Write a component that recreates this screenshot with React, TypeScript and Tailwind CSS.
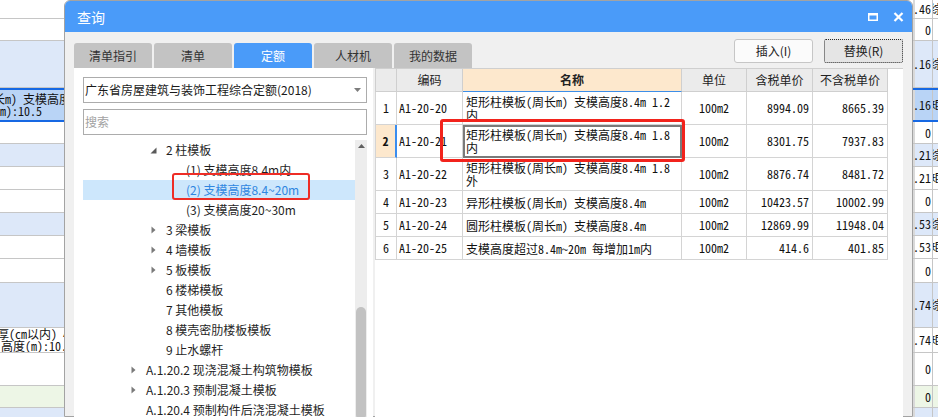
import React from "react";

const MONO = "font-['Noto_Sans_Mono_CJK_SC','Liberation_Mono','Noto_Sans_CJK_SC',monospace]";

type StripRow = {
  h: string;
  bg: string;
  sel?: boolean;
  val?: string;
  side?: string;
  lines?: { t: string; cls: string }[];
};

const STRIP: StripRow[] = [
  { h: "h-[19px]", bg: "bg-white", val: ".46", side: "综" },
  { h: "h-[22px]", bg: "bg-white", val: "0" },
  { h: "h-[47px]", bg: "bg-[#dde8f9]", val: ".16", side: "综" },
  {
    h: "h-[34px]",
    bg: "bg-[#b9d4f6]",
    sel: true,
    val: ".16",
    side: "矩",
    lines: [
      { t: "长m) 支模高度8.4m", cls: "ml-[-7px]" },
      { t: "m):10.5", cls: "ml-0" },
    ],
  },
  { h: "h-[22px]", bg: "bg-white", val: "0" },
  { h: "h-[23px]", bg: "bg-[#dde8f9]", val: ".21", side: "综" },
  { h: "h-[23px]", bg: "bg-white", val: ".21", side: "矩" },
  { h: "h-[23px]", bg: "bg-white", val: "0" },
  { h: "h-[23px]", bg: "bg-[#dde8f9]", val: ".53", side: "综" },
  { h: "h-[23px]", bg: "bg-white", val: ".53", side: "矩" },
  { h: "h-[24px]", bg: "bg-white", val: "0" },
  { h: "h-[45px]", bg: "bg-[#dde8f9]", val: ".74", side: "综" },
  {
    h: "h-[25px]",
    bg: "bg-white",
    val: ".74",
    side: "矩",
    lines: [
      { t: "厚(cm以内) 4", cls: "ml-[-3px]" },
      { t: "高度(m):10.5", cls: "ml-[1px]" },
    ],
  },
  { h: "h-[33px]", bg: "bg-white", val: "0" },
  { h: "h-[22px]", bg: "bg-[#edf6e6]", val: "0" },
  { h: "h-[30px]", bg: "bg-[#dde8f9]", val: "0" },
];

const TREE = [
  { pl: "pl-[69px]", caret: "open", label: "2 柱模板" },
  { pl: "pl-[89px]", label: "(1) 支模高度8.4m内" },
  { pl: "pl-[89px]", label: "(2) 支模高度8.4~20m", sel: true },
  { pl: "pl-[89px]", label: "(3) 支模高度20~30m" },
  { pl: "pl-[69px]", caret: "closed", label: "3 梁模板" },
  { pl: "pl-[69px]", caret: "closed", label: "4 墙模板" },
  { pl: "pl-[69px]", caret: "closed", label: "5 板模板" },
  { pl: "pl-[69px]", label: "6 楼梯模板" },
  { pl: "pl-[69px]", label: "7 其他模板" },
  { pl: "pl-[69px]", label: "8 模壳密肋楼板模板" },
  { pl: "pl-[69px]", label: "9 止水螺杆" },
  { pl: "pl-[49px]", caret: "closed", label: "A.1.20.2 现浇混凝土构筑物模板" },
  { pl: "pl-[49px]", caret: "closed", label: "A.1.20.3 预制混凝土模板" },
  { pl: "pl-[49px]", label: "A.1.20.4 预制构件后浇混凝土模板" },
];

const ROWS = [
  { no: "1", code: "A1-20-20", name: "矩形柱模板(周长m) 支模高度8.4m 1.2内", h: "h-[33px]", unit: "100m2", tax: "8994.09", notax: "8665.39" },
  { no: "2", code: "A1-20-21", name: "矩形柱模板(周长m) 支模高度8.4m 1.8内", h: "h-[33px]", unit: "100m2", tax: "8301.75", notax: "7937.83", sel: true },
  { no: "3", code: "A1-20-22", name: "矩形柱模板(周长m) 支模高度8.4m 1.8外", h: "h-[33px]", unit: "100m2", tax: "8876.74", notax: "8481.72" },
  { no: "4", code: "A1-20-23", name: "异形柱模板(周长m) 支模高度8.4m", h: "h-[23px]", unit: "100m2", tax: "10423.57", notax: "10002.99" },
  { no: "5", code: "A1-20-24", name: "圆形柱模板(周长m) 支模高度8.4m", h: "h-[23px]", unit: "100m2", tax: "12869.99", notax: "11948.04" },
  { no: "6", code: "A1-20-25", name: "支模高度超过8.4m~20m 每增加1m内", h: "h-[23px]", unit: "100m2", tax: "414.6", notax: "401.85" },
];

function LeftStrip() {
  return (
    <div className={`flex w-[64px] shrink-0 flex-col overflow-hidden text-[12px] text-[#111] ${MONO}`}>
      {STRIP.map((r, i) => (
        <div
          key={i}
          className={`flex shrink-0 flex-col justify-center overflow-hidden whitespace-nowrap ${r.h} ${r.bg} ${
            r.sel ? "border-y-2 border-[#1668e3]" : "border-b border-[#c6c6c6]"
          }`}
        >
          {r.lines?.map((l, j) => (
            <div key={j} className={`leading-[12px] ${l.cls}`}>
              {l.t}
            </div>
          ))}
        </div>
      ))}
    </div>
  );
}

function RightStrip() {
  return (
    <div className={`flex w-[25px] shrink-0 flex-col overflow-hidden text-[12px] text-[#111] ${MONO}`}>
      {STRIP.map((r, i) => (
        <div
          key={i}
          className={`flex w-[25px] shrink-0 ${r.h} ${r.bg} ${
            r.sel ? "border-y-2 border-[#1668e3]" : "border-b border-[#c6c6c6]"
          }`}
        >
          <div className="w-[2px] shrink-0 bg-[#d9d9d9]" />
          <div className="flex w-[18px] min-w-0 shrink-0 items-center justify-end whitespace-nowrap border-r border-[#c6c6c6] pr-[1px] leading-none">
            {r.val}
          </div>
          <div className="flex min-w-0 flex-1 items-center overflow-hidden whitespace-nowrap leading-none">
            <span className="ml-[-3px]">{r.side}</span>
          </div>
        </div>
      ))}
    </div>
  );
}

function Caret({ kind }: { kind?: string }) {
  if (kind === "open") {
    return (
      <svg width="7" height="7" viewBox="0 0 7 7" className="ml-[-2px]">
        <path d="M6.5 0.5 L6.5 6.5 L0.5 6.5 Z" fill="#5a5a5a" />
      </svg>
    );
  }
  if (kind === "closed") {
    return (
      <svg width="5" height="8" viewBox="0 0 5 8" className="ml-[-1px]">
        <path d="M0.5 0.5 L4.5 4 L0.5 7.5 Z" fill="#7a7a7a" />
      </svg>
    );
  }
  return null;
}

function Tree() {
  return (
    <div className="mt-[5px] flex flex-1">
      <div className="flex w-[272px] flex-col">
        {TREE.map((t, i) => (
          <div
            key={i}
            className={`relative flex h-[20px] shrink-0 items-center whitespace-nowrap ${t.pl} ${
              t.sel ? "bg-[#cde7fc] text-[#2f86e0]" : "text-[#1f1f1f]"
            }`}
          >
            <div className="flex w-[14px] shrink-0 items-center">
              <Caret kind={t.caret} />
            </div>
            <span className="leading-none">{t.label}</span>
            {t.sel && (
              <div className="absolute left-[89px] top-[-7px] h-[27px] w-[138px] rounded-[3px] border-2 border-[#ee2d26]" />
            )}
          </div>
        ))}
      </div>
      <div className="flex w-[12px] flex-col bg-[#ededed]">
        <div className="flex h-[8px] items-end justify-center">
          <svg width="7" height="4" viewBox="0 0 7 4">
            <path d="M3.5 0 L7 4 L0 4 Z" fill="#606060" />
          </svg>
        </div>
        <div className="h-[159px]" />
        <div className="mx-[1px] flex-1 rounded-[5px] bg-[#c2c2c2]" />
      </div>
    </div>
  );
}

function LeftPanel() {
  return (
    <div className="flex w-[299px] shrink-0 flex-col bg-white pl-[9px] pr-[6px] pt-[9px] text-[12px]">
      <div className="flex h-[26px] shrink-0 items-center justify-between border border-[#acacac] pl-[1px] pr-[5px] text-[#1a1a1a]">
        <span className="leading-none">广东省房屋建筑与装饰工程综合定额(2018)</span>
        <svg width="7" height="4" viewBox="0 0 7 4">
          <path d="M0 0 L7 0 L3.5 4 Z" fill="#7d7d7d" />
        </svg>
      </div>
      <div className="mt-[6px] flex h-[26px] shrink-0 items-center border border-[#acacac] pl-[1px] text-[#a2a2a2]">
        <span className="leading-none">搜索</span>
      </div>
      <Tree />
    </div>
  );
}

function DataTable() {
  return (
    <div className="relative flex w-[528px] shrink-0 flex-col bg-white">
      <div className="flex h-[24px] shrink-0 border-t border-[#cfcfcf] text-[12px] text-[#222]">
        <div className="w-[22px] border-x border-b border-[#cfcfcf] bg-[#ebebeb]" />
        <div className="flex w-[66px] items-center justify-center border-r border-b border-[#cfcfcf] bg-[#ebebeb]">编码</div>
        <div className="flex w-[219px] items-center justify-center border-r border-r-[#cfcfcf] border-b border-b-[#3d8ee8] bg-[#fde8cd] font-bold">
          名称
        </div>
        <div className="flex w-[65px] items-center justify-center border-r border-b border-[#cfcfcf] bg-[#ebebeb]">单位</div>
        <div className="flex w-[66px] items-center justify-center border-r border-b border-[#cfcfcf] bg-[#ebebeb]">含税单价</div>
        <div className="flex w-[75px] items-center justify-center border-r border-b border-[#cfcfcf] bg-[#ebebeb]">不含税单价</div>
      </div>
      {ROWS.map((r) => (
        <div key={r.no} className={`flex shrink-0 text-[12px] text-[#111] ${r.h} ${MONO}`}>
          <div
            className={`flex w-[22px] items-center justify-center border-l border-b border-[#d4d4d4] ${
              r.sel ? "border-r-2 border-r-[#3a8def] bg-[#fde8cd] font-bold" : "border-r border-r-[#d4d4d4]"
            }`}
          >
            {r.no}
          </div>
          <div className="flex w-[66px] items-center border-r border-b border-[#d4d4d4] pl-[2px]">{r.code}</div>
          <div
            className={`flex w-[219px] items-center border-r border-b border-[#d4d4d4] px-[3px] leading-[13px] ${
              r.sel ? "outline-2 -outline-offset-2 outline-[#7a7a7a]" : ""
            }`}
          >
            <span>{r.name}</span>
          </div>
          <div className="flex w-[65px] items-center justify-center border-r border-b border-[#d4d4d4]">{r.unit}</div>
          <div className="flex w-[66px] items-center justify-end border-r border-b border-[#d4d4d4] pr-[3px]">{r.tax}</div>
          <div className="flex w-[75px] items-center justify-end border-r border-b border-[#d4d4d4] pr-[3px]">{r.notax}</div>
        </div>
      ))}
      <div className="absolute left-[65px] top-[51px] h-[43px] w-[245px] rounded-[3px] border-[3px] border-[#f2231c]" />
    </div>
  );
}

function Dialog() {
  const tabs = ["清单指引", "清单", "定额", "人材机", "我的数据"];
  return (
    <div className="flex w-[849px] shrink-0 flex-col rounded-t-[6px] border border-[#a3a3a3] bg-[#f0f0f0]">
      <div className="flex h-[31px] shrink-0 items-center justify-between rounded-t-[5px] bg-[#4a9bf9] pl-[12px] pr-[8px] text-[14px] text-white">
        <span className="leading-none">查询</span>
        <div className="flex items-center gap-[15px]">
          <svg width="10" height="8" viewBox="0 0 10 8">
            <rect x="0.75" y="1" width="8.5" height="6.25" fill="none" stroke="white" strokeWidth="1.5" />
            <rect x="0" y="0" width="10" height="2.5" fill="white" />
          </svg>
          <svg width="11" height="10" viewBox="0 0 11 10">
            <path d="M1.5 1 L9.5 9 M9.5 1 L1.5 9" stroke="white" strokeWidth="2.2" />
          </svg>
        </div>
      </div>
      <div className="flex flex-1 flex-col px-[9px]">
        <div className="flex h-[36px] shrink-0 justify-between text-[12px]">
          <div className="flex items-end gap-[2px]">
            {tabs.map((t) => (
              <div
                key={t}
                className={`flex h-[25px] w-[78px] items-center justify-center rounded-t-[3px] ${
                  t === "定额" ? "bg-[#4a9bf9] text-white" : "bg-[#c3c3c3] text-[#333]"
                }`}
              >
                {t}
              </div>
            ))}
          </div>
          <div className="mt-[7px] flex gap-[11px]">
            <div className="flex h-[24px] w-[79px] items-center justify-center rounded-[3px] border border-[#c6c6c6] bg-[#fbfbfb] text-[#222]">
              插入(I)
            </div>
            <div className="flex h-[24px] w-[79px] items-center justify-center rounded-[2px] border border-dotted border-[#2a2a2a] bg-[#e5e5e5] text-[#222]">
              替换(R)
            </div>
          </div>
        </div>
        <div className="flex flex-1 gap-[2px]">
          <LeftPanel />
          <DataTable />
        </div>
      </div>
    </div>
  );
}

export default function App() {
  return (
    <div className="flex h-[417px] w-[938px] overflow-hidden bg-white font-['Noto_Sans_CJK_SC',sans-serif]">
      <LeftStrip />
      <Dialog />
      <RightStrip />
    </div>
  );
}
